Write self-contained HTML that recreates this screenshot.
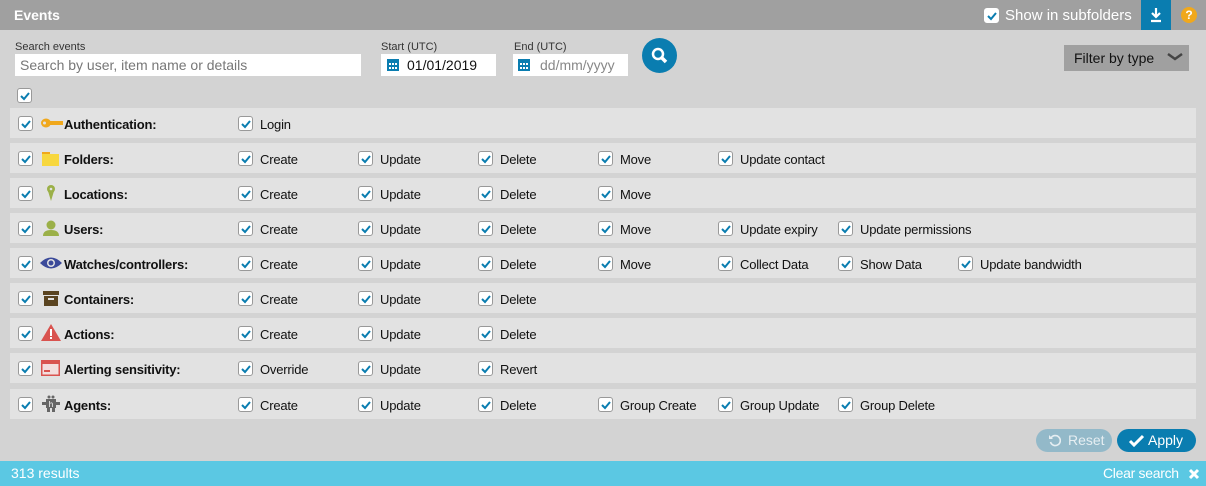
<!DOCTYPE html>
<html><head><style>
*{box-sizing:border-box;margin:0;padding:0}
body{width:1206px;height:486px;background:#d3d3d3;font-family:"Liberation Sans",sans-serif;position:relative;overflow:hidden;color:#111}
.hdr{position:absolute;left:0;top:0;width:1206px;height:30px;background:#a0a0a0}
.hdr .t{position:absolute;left:14px;top:7px;color:#fff;font-size:14px;font-weight:bold}
.cb{position:absolute;width:15px;height:15px;background:#fff;border:1px solid #999;border-radius:3px}
.cb svg{position:absolute;left:1px;top:1px}
.abs{position:absolute}
.lbl{position:absolute;font-size:11px;color:#333}
.inp{position:absolute;background:#fff;height:22px;font-size:14px;line-height:22px}
.row{position:absolute;left:10px;width:1186px;height:30px;background:#e2e2e2}
.row .n{position:absolute;left:54px;top:9px;font-size:13px;font-weight:bold;letter-spacing:-0.2px}
.row .i{position:absolute;left:30px;top:6px}
.row .c{position:absolute;top:9px;font-size:13px;letter-spacing:-0.2px}
.foot{position:absolute;left:0;top:461px;width:1206px;height:25px;background:#5bc8e3;color:#fff;font-size:14px}
</style></head><body>
<div class="hdr"><div class="t">Events</div>
<div class="cb" style="left:984px;top:8px;border-color:#fff"><svg width="12" height="12" viewBox="0 0 12 12"><path d="M2 6l3 3 5-6" stroke="#0a7db0" stroke-width="2" fill="none"/></svg></div>
<div class="abs" style="left:1005px;top:7px;color:#fff;font-size:15px">Show in subfolders</div>
<div class="abs" style="left:1141px;top:0;width:30px;height:30px;background:#0a7db0"><svg width="30" height="30"><path d="M15 8v9M11 13l4 4 4-4M10 21h10" stroke="#fff" stroke-width="2.2" fill="none"/></svg></div>
<div class="abs" style="left:1181px;top:7px;width:16px;height:16px;border-radius:50%;background:#f0a81c;color:#fff;font-size:12px;font-weight:bold;text-align:center;line-height:16px">?</div>
</div>
<div class="lbl" style="left:15px;top:41px">Search events</div>
<div class="inp" style="left:15px;top:54px;width:346px;color:#777;padding-left:5px">Search by user, item name or details</div>
<div class="lbl" style="left:381px;top:41px">Start (UTC)</div>
<div class="inp" style="left:381px;top:54px;width:115px;padding-left:26px">01/01/2019</div>
<div class="lbl" style="left:514px;top:41px">End (UTC)</div>
<div class="inp" style="left:513px;top:54px;width:115px;padding-left:27px;color:#888">dd/mm/yyyy</div>
<svg class="abs" style="left:387px;top:58px" width="12" height="13"><rect x="0" y="1" width="12" height="12" fill="#0a7db0"/><g fill="#fff"><rect x="2" y="5" width="2" height="2"/><rect x="5" y="5" width="2" height="2"/><rect x="8" y="5" width="2" height="2"/><rect x="2" y="9" width="2" height="2"/><rect x="5" y="9" width="2" height="2"/><rect x="8" y="9" width="2" height="2"/></g></svg>
<svg class="abs" style="left:518px;top:58px" width="12" height="13"><rect x="0" y="1" width="12" height="12" fill="#0a7db0"/><g fill="#fff"><rect x="2" y="5" width="2" height="2"/><rect x="5" y="5" width="2" height="2"/><rect x="8" y="5" width="2" height="2"/><rect x="2" y="9" width="2" height="2"/><rect x="5" y="9" width="2" height="2"/><rect x="8" y="9" width="2" height="2"/></g></svg>
<div class="abs" style="left:642px;top:38px;width:35px;height:35px;border-radius:50%;background:#0a7db0"><svg width="35" height="35"><circle cx="16" cy="16" r="5" stroke="#fff" stroke-width="2.5" fill="none"/><path d="M19.5 19.5l4.5 4.5" stroke="#fff" stroke-width="3.5"/></svg></div>
<div class="abs" style="left:1064px;top:45px;width:125px;height:26px;background:#a0a0a0;font-size:14px;padding:5px 0 0 10px">Filter by type<svg class="abs" style="left:103px;top:8px" width="16" height="8"><path d="M1 1l7 5 7-5" stroke="#444" stroke-width="2.5" fill="none"/></svg></div>
<div class="cb" style="left:17px;top:88px"><svg width="12" height="12" viewBox="0 0 12 12"><path d="M2 6l3 3 5-6" stroke="#0a7db0" stroke-width="2" fill="none"/></svg></div>
<div id="rows"></div>
<div class="abs" style="left:1036px;top:429px;width:76px;height:23px;border-radius:12px;background:#93b9c9;color:#e6eef2;font-size:14px;padding:3px 0 0 32px">Reset<svg class="abs" style="left:12px;top:5px" width="13" height="13"><path d="M3 4A5 5 0 1 1 2.5 8" stroke="#e6eef2" stroke-width="1.6" fill="none"/><path d="M1 1v4h4z" fill="#e6eef2"/></svg></div>
<div class="abs" style="left:1117px;top:429px;width:79px;height:23px;border-radius:12px;background:#0a7db0;color:#fff;font-size:14px;padding:3px 0 0 31px">Apply<svg class="abs" style="left:11px;top:5px" width="17" height="13"><path d="M2 7l4 4 9-9" stroke="#fff" stroke-width="3" fill="none"/></svg></div>
<div class="foot"><span class="abs" style="left:11px;top:4px">313 results</span><span class="abs" style="left:1103px;top:4px;letter-spacing:-0.3px">Clear search</span><svg class="abs" style="left:1188px;top:7px" width="12" height="12"><path d="M2 2l8 8M10 2l-8 8" stroke="#fff" stroke-width="3"/></svg></div>
<script>
var ck='<svg width="12" height="12" viewBox="0 0 12 12"><path d="M2 6l3 3 5-6" stroke="#0a7db0" stroke-width="2" fill="none"/></svg>';
var icons=[
'<svg width="24" height="18"><ellipse cx="6" cy="9" rx="5" ry="4.5" fill="#f0a81c"/><rect x="9" y="7" width="14" height="4" fill="#f0a81c"/><circle cx="4.5" cy="9" r="1.5" fill="#e2e2e2"/></svg>',
'<svg width="22" height="18"><path d="M2 3h6l2 2h9v12H2z" fill="#f7d73e"/><rect x="2" y="3" width="8" height="2" fill="#f0a81c"/></svg>',
'<svg width="22" height="18"><circle cx="11" cy="5" r="4" fill="#9bb048"/><circle cx="11" cy="5" r="1.3" fill="#e2e2e2"/><path d="M8 7l3 10 3-10z" fill="#9bb048"/></svg>',
'<svg width="22" height="18"><circle cx="11" cy="6" r="4.5" fill="#9bb048"/><path d="M3 17q0-6 8-6t8 6z" fill="#9bb048"/></svg>',
'<svg width="22" height="18"><path d="M0 9q11-11 22 0q-11 11-22 0z" fill="#3b4a9a"/><circle cx="11" cy="9" r="4" fill="#e2e2e2"/><circle cx="11" cy="9" r="2.5" fill="#3b4a9a"/></svg>',
'<svg width="22" height="18"><rect x="3" y="2" width="16" height="4" fill="#5a4420"/><rect x="4" y="7" width="14" height="10" fill="#5a4420"/><rect x="8" y="9" width="6" height="2" fill="#e2e2e2"/></svg>',
'<svg width="22" height="18"><path d="M11 0L21 17H1z" fill="#d9534f"/><rect x="10" y="5" width="2" height="7" fill="#fff"/><rect x="10" y="13" width="2" height="2" fill="#fff"/></svg>',
'<svg width="22" height="18"><rect x="1" y="1" width="19" height="16" fill="#d9534f"/><rect x="2.5" y="5" width="16" height="10.5" fill="#f3dede"/><rect x="4" y="11" width="6" height="2" fill="#d9534f"/></svg>',
'<svg width="22" height="18"><circle cx="9" cy="2" r="1.5" fill="#666"/><circle cx="13" cy="2" r="1.5" fill="#666"/><rect x="6" y="4" width="10" height="9" fill="#666"/><rect x="2" y="7" width="4" height="3" fill="#666"/><rect x="16" y="7" width="4" height="3" fill="#666"/><rect x="7" y="13" width="3" height="4" fill="#666"/><rect x="12" y="13" width="3" height="4" fill="#666"/><text x="11" y="12" font-size="8" fill="#fff" text-anchor="middle" font-family="Liberation Sans">h</text></svg>'];
var rows=[["Authentication:",["Login"]],["Folders:",["Create","Update","Delete","Move","Update contact"]],["Locations:",["Create","Update","Delete","Move"]],["Users:",["Create","Update","Delete","Move","Update expiry","Update permissions"]],["Watches/controllers:",["Create","Update","Delete","Move","Collect Data","Show Data","Update bandwidth"]],["Containers:",["Create","Update","Delete"]],["Actions:",["Create","Update","Delete"]],["Alerting sensitivity:",["Override","Update","Revert"]],["Agents:",["Create","Update","Delete","Group Create","Group Update","Group Delete"]]];
var h='';
rows.forEach(function(r,i){var top=108+i*35+(i==8?1:0);
h+='<div class="row" style="top:'+top+'px"><div class="cb" style="left:8px;top:8px">'+ck+'</div><div class="i">'+icons[i]+'</div><div class="n">'+r[0]+'</div>';
r[1].forEach(function(c,j){var x=228+j*120;h+='<div class="cb" style="left:'+x+'px;top:8px">'+ck+'</div><div class="c" style="left:'+(x+22)+'px">'+c+'</div>';});
h+='</div>';});
document.getElementById('rows').innerHTML=h;
</script>
</body></html>
